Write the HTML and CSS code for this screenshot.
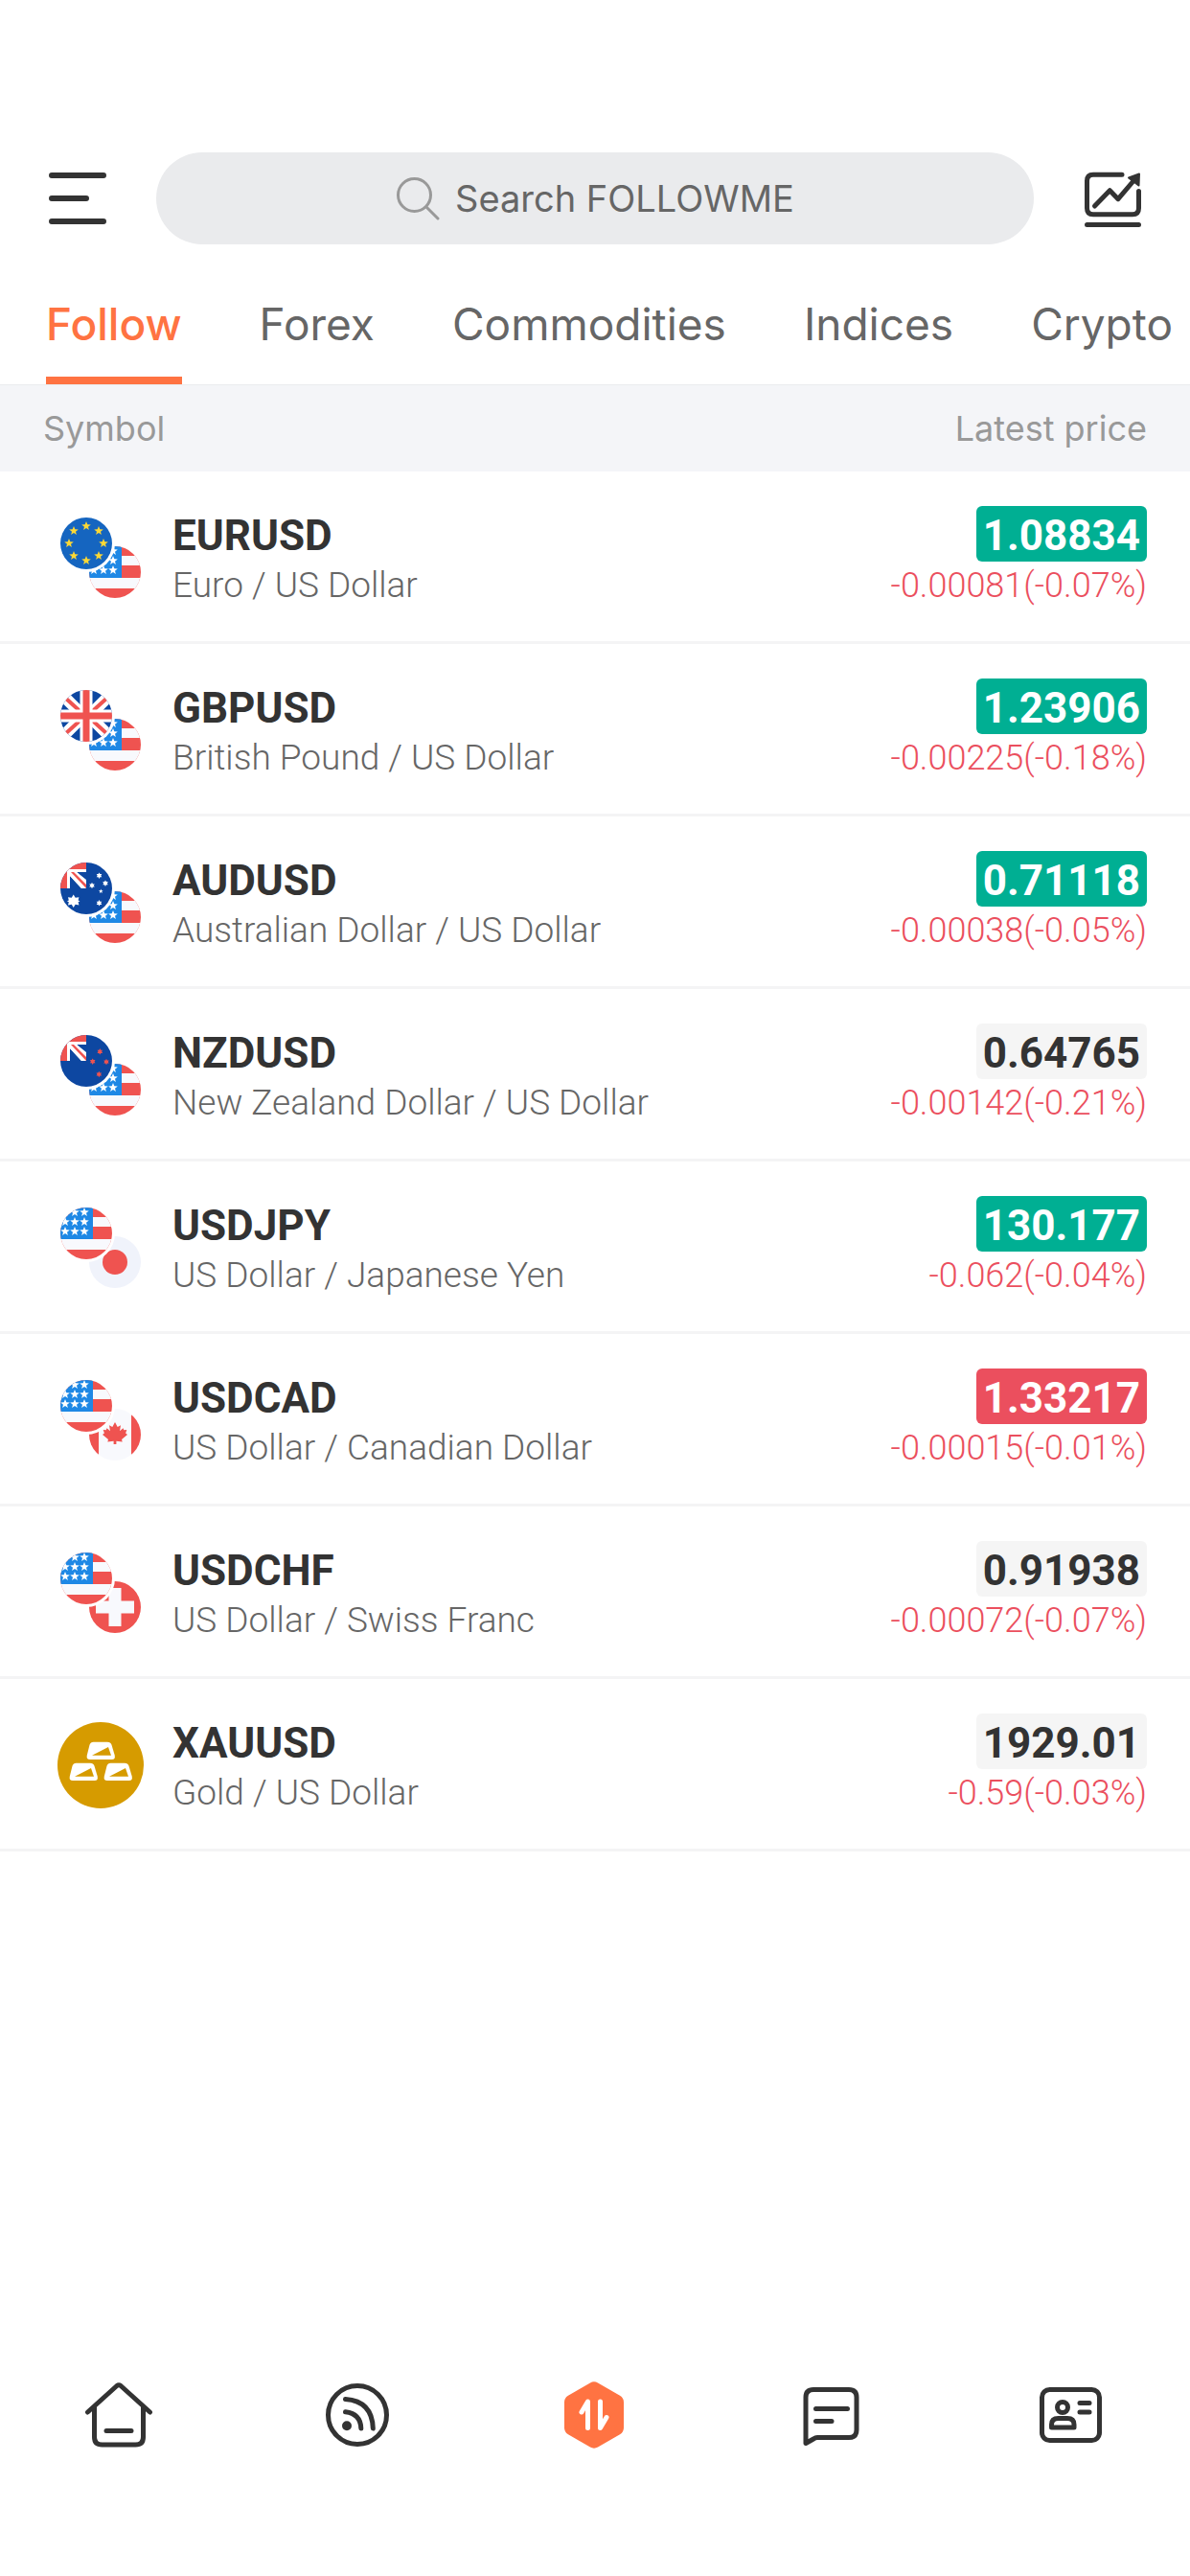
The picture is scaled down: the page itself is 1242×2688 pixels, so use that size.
FILE: index.html
```
<!DOCTYPE html>
<html lang="en">

<head>
    <meta charset="UTF-8">
    <meta name="viewport" content="width=device-width, initial-scale=1.0">
    <title>FOLLOWME - Quotes</title>
    <link rel="stylesheet" href="styles.css">
</head>

<body>
    <!-- Flags and shared shapes -->
    <svg class="sprite" width="0" height="0" aria-hidden="true">
        <defs>
            <clipPath id="round"><circle cx="27" cy="27" r="27" /></clipPath>
            <polygon id="star" points="0,-5 1.3,-1.7 4.8,-1.5 2,.7 2.9,4 0,2.1 -2.9,4 -2,.7 -4.8,-1.5 -1.3,-1.7" />
            <polygon id="spark" points="0,-3.2 .9,-1.6 2.8,-1.6 1.8,0 2.8,1.6 .9,1.6 0,3.2 -.9,1.6 -2.8,1.6 -1.8,0 -2.8,-1.6 -.9,-1.6" />
            <g id="union-arm">
                <path d="M-2 1 L27 30" stroke="#fff" stroke-width="12" />
                <path d="M0 3.5 L22 23.5" stroke="#ef5350" stroke-width="4" />
            </g>
            <g id="canton">
                <path fill="#ef5350" d="M0 0h27v27H0z" />
                <path fill="#fff" d="M7 7h20v20H7z" />
                <path fill="#0d47a1" d="M17 10h10v8zM10 14v13h12z" />
                <path fill="#fff" d="M10 10h7l10 9v8h-5L10 14z" />
                <path fill="#ef5350" d="M11 10h3l13 13v4z" />
            </g>
            <g id="us" clip-path="url(#round)">
                <path fill="#ef5350" d="M0 0h54v54H0z" />
                <path fill="#f8f9fd" d="M0 10h54v10H0zM0 33h54v11H0z" />
                <path fill="#1e88e5" d="M0 0h34v33H0z" />
                <g fill="#fff">
                    <use href="#star" x="5" y="5" /><use href="#star" x="15" y="5" /><use href="#star" x="25" y="5" />
                    <use href="#star" x="5" y="15" /><use href="#star" x="15" y="15" /><use href="#star" x="25" y="15" />
                    <use href="#star" x="5" y="25" /><use href="#star" x="15" y="25" /><use href="#star" x="25" y="25" />
                </g>
            </g>
            <g id="eu">
                <circle cx="27" cy="27" r="27" fill="#1565c0" />
                <g fill="#fdd835">
                    <use href="#star" x="27" y="9" /><use href="#star" x="40" y="14" />
                    <use href="#star" x="45" y="27" /><use href="#star" x="40" y="40" />
                    <use href="#star" x="27" y="45" /><use href="#star" x="14" y="40" />
                    <use href="#star" x="9" y="27" /><use href="#star" x="14" y="14" />
                </g>
            </g>
            <g id="gb" clip-path="url(#round)">
                <path fill="#0d47a1" d="M0 0h54v54H0z" />
                <use href="#union-arm" />
                <use href="#union-arm" transform="translate(54 0) scale(-1 1)" />
                <use href="#union-arm" transform="translate(0 54) scale(1 -1)" />
                <use href="#union-arm" transform="translate(54 54) scale(-1 -1)" />
                <path fill="#fff" d="M20.5 0h13v54h-13zM0 20.5h54v13H0z" />
                <path fill="#ef5350" d="M23.5 0h7v54h-7zM0 23.5h54v7H0z" />
            </g>
            <g id="au" clip-path="url(#round)">
                <path fill="#0d47a1" d="M0 0h54v54H0z" />
                <use href="#canton" />
                <g fill="#fff">
                    <path d="M13.7 33.5l2 3.3 3.7-.6-.8 3.2 1.9.9-1.9.9.8 3.2-3.7-.6-2 3.3-2-3.3-3.7.6.8-3.2-1.9-.9 1.9-.9-.8-3.2 3.7.6z" />
                    <use href="#spark" x="33" y="24" /><use href="#spark" x="40.5" y="13.7" />
                    <use href="#spark" x="47" y="21.7" /><use href="#spark" x="40.5" y="42.3" />
                    <use href="#star" transform="translate(42.3 30) scale(.5)" />
                </g>
            </g>
            <g id="nz" clip-path="url(#round)">
                <path fill="#0d47a1" d="M0 0h54v54H0z" />
                <use href="#canton" />
                <g fill="#ef5350">
                    <use href="#spark" x="41.3" y="17.3" /><use href="#spark" x="33.7" y="27.7" />
                    <use href="#spark" x="48" y="28" /><use href="#spark" x="40.3" y="41" />
                </g>
            </g>
            <g id="jp">
                <circle cx="27" cy="27" r="27" fill="#f0f3fb" />
                <circle cx="27" cy="27" r="13" fill="#ef5350" />
            </g>
            <g id="ca" clip-path="url(#round)">
                <path fill="#f8f9fd" d="M0 0h54v54H0z" />
                <path fill="#ef5350" d="M0 0h10v54H0zM44 0h10v54H44z" />
                <path fill="#ef5350" d="M27 14l2.7 5 3.3-1.7-1 6 3.5-3 .8 2 3-.3-1.2 3.5L40 27l-6 5 .7 2.5-6.3-.7V37h-2.800v-3.200l-6.300.7.7-2.5-6-5 1.900-1.500-1.200-3.500 3 .3.8-2 3.500 3-1-6 3.300 1.700z" />
            </g>
            <g id="ch">
                <circle cx="27" cy="27" r="27" fill="#ef5350" />
                <path fill="#f8f9fd" d="M20.5 7h13v13.5H47v13H33.5V47h-13V33.5H7v-13h13.5z" />
            </g>
            <g id="ingot">
                <path fill="#fff" d="M37.5 20.7h14.5q3.5 0 4.500 3l3.200 10.800q1 4.500-3 4.500H34q-4.200 0-3.200-4.500l2.700-10.800q1-3 4-3z" />
                <path fill="#d69b00" d="M36 34.7L53 26l3 8.700z" />
            </g>
        </defs>
    </svg>

    <header class="app-bar">
        <button type="button" class="icon-btn" aria-label="Menu">
            <svg viewBox="0 0 60 60" stroke-width="6">
                <path d="M3 6h54M3 30h36M3 54h54" />
            </svg>
        </button>
        <label class="search">
            <svg viewBox="0 0 46 46" stroke-width="3">
                <circle cx="19.5" cy="19.5" r="17" />
                <path d="M32 32l12 12" />
            </svg>
            <input type="text" placeholder="Search FOLLOWME" aria-label="Search FOLLOWME">
        </label>
        <button type="button" class="icon-btn" aria-label="Chart">
            <svg viewBox="0 0 60 60" stroke-width="5">
                <path d="M40 5.3H10q-6.5 0-6.5 6.5v28.4q0 6.5 6.5 6.5h41q6.5 0 6.5-6.5V22.5M3.5 57.5h54" />
                <path d="M11.5 38L27.3 21.7l8.7 9L51 13" />
                <path fill="#333" stroke="#333" stroke-width="2" d="M47 8.5l11-4-.5 12z" />
            </svg>
        </button>
    </header>

    <nav class="tabs">
        <a href="#follow" class="active">Follow</a>
        <a href="#forex">Forex</a>
        <a href="#commodities">Commodities</a>
        <a href="#indices">Indices</a>
        <a href="#crypto">Crypto</a>
    </nav>

    <main>
        <table class="quotes">
            <thead>
                <tr>
                    <th>Symbol</th>
                    <th class="right">Latest price</th>
                </tr>
            </thead>
            <tbody>
                <tr>
                    <td>
                        <div class="symbol">
                            <svg viewBox="0 0 90 90"><use href="#us" x="33" y="33" /><circle cx="30" cy="30" r="30" fill="#fff" /><use href="#eu" x="3" y="3" /></svg>
                            <div>
                                <div class="name">EURUSD</div>
                                <div class="desc">Euro / US Dollar</div>
                            </div>
                        </div>
                    </td>
                    <td class="right">
                        <span class="price up">1.08834</span>
                        <div class="change">-0.00081(-0.07%)</div>
                    </td>
                </tr>
                <tr>
                    <td>
                        <div class="symbol">
                            <svg viewBox="0 0 90 90"><use href="#us" x="33" y="33" /><circle cx="30" cy="30" r="30" fill="#fff" /><use href="#gb" x="3" y="3" /></svg>
                            <div>
                                <div class="name">GBPUSD</div>
                                <div class="desc">British Pound / US Dollar</div>
                            </div>
                        </div>
                    </td>
                    <td class="right">
                        <span class="price up">1.23906</span>
                        <div class="change">-0.00225(-0.18%)</div>
                    </td>
                </tr>
                <tr>
                    <td>
                        <div class="symbol">
                            <svg viewBox="0 0 90 90"><use href="#us" x="33" y="33" /><circle cx="30" cy="30" r="30" fill="#fff" /><use href="#au" x="3" y="3" /></svg>
                            <div>
                                <div class="name">AUDUSD</div>
                                <div class="desc">Australian Dollar / US Dollar</div>
                            </div>
                        </div>
                    </td>
                    <td class="right">
                        <span class="price up">0.71118</span>
                        <div class="change">-0.00038(-0.05%)</div>
                    </td>
                </tr>
                <tr>
                    <td>
                        <div class="symbol">
                            <svg viewBox="0 0 90 90"><use href="#us" x="33" y="33" /><circle cx="30" cy="30" r="30" fill="#fff" /><use href="#nz" x="3" y="3" /></svg>
                            <div>
                                <div class="name">NZDUSD</div>
                                <div class="desc">New Zealand Dollar / US Dollar</div>
                            </div>
                        </div>
                    </td>
                    <td class="right">
                        <span class="price">0.64765</span>
                        <div class="change">-0.00142(-0.21%)</div>
                    </td>
                </tr>
                <tr>
                    <td>
                        <div class="symbol">
                            <svg viewBox="0 0 90 90"><use href="#jp" x="33" y="33" /><circle cx="30" cy="30" r="30" fill="#fff" /><use href="#us" x="3" y="3" /></svg>
                            <div>
                                <div class="name">USDJPY</div>
                                <div class="desc">US Dollar / Japanese Yen</div>
                            </div>
                        </div>
                    </td>
                    <td class="right">
                        <span class="price up">130.177</span>
                        <div class="change">-0.062(-0.04%)</div>
                    </td>
                </tr>
                <tr>
                    <td>
                        <div class="symbol">
                            <svg viewBox="0 0 90 90"><use href="#ca" x="33" y="33" /><circle cx="30" cy="30" r="30" fill="#fff" /><use href="#us" x="3" y="3" /></svg>
                            <div>
                                <div class="name">USDCAD</div>
                                <div class="desc">US Dollar / Canadian Dollar</div>
                            </div>
                        </div>
                    </td>
                    <td class="right">
                        <span class="price down">1.33217</span>
                        <div class="change">-0.00015(-0.01%)</div>
                    </td>
                </tr>
                <tr>
                    <td>
                        <div class="symbol">
                            <svg viewBox="0 0 90 90"><use href="#ch" x="33" y="33" /><circle cx="30" cy="30" r="30" fill="#fff" /><use href="#us" x="3" y="3" /></svg>
                            <div>
                                <div class="name">USDCHF</div>
                                <div class="desc">US Dollar / Swiss Franc</div>
                            </div>
                        </div>
                    </td>
                    <td class="right">
                        <span class="price">0.91938</span>
                        <div class="change">-0.00072(-0.07%)</div>
                    </td>
                </tr>
                <tr>
                    <td>
                        <div class="symbol">
                            <svg viewBox="0 0 90 90"><circle cx="45" cy="45" r="45" fill="#d69b00" /><use href="#ingot" /><use href="#ingot" x="-18" y="22" /><use href="#ingot" x="18" y="22" /></svg>
                            <div>
                                <div class="name">XAUUSD</div>
                                <div class="desc">Gold / US Dollar</div>
                            </div>
                        </div>
                    </td>
                    <td class="right">
                        <span class="price">1929.01</span>
                        <div class="change">-0.59(-0.03%)</div>
                    </td>
                </tr>
            </tbody>
        </table>
    </main>

    <!-- Bottom navigation -->
    <nav class="bottom-nav">
        <a href="#home" aria-label="Home">
            <svg viewBox="0 0 72 72">
                <path d="M3.5 33L34 5.500q2-1.500 4 0L68.500 33M10.500 28v31q0 8 8 8h35q8 0 8-8V28M23 52.500h26" />
            </svg>
        </a>
        <a href="#feed" aria-label="Feed">
            <svg viewBox="0 0 72 72">
                <circle cx="36" cy="36" r="30.5" />
                <path d="M23.5 32.7q16 2 16.3 17.3M23.5 19.5q28 2 28.8 30.5" />
                <circle cx="25" cy="47.3" r="2.5" />
            </svg>
        </a>
        <a href="#trade" aria-label="Trade">
            <svg viewBox="0 0 72 72">
                <polygon fill="#ff7342" stroke="#ff7342" stroke-width="16" class="hex" points="35,9.4 58,22.7 58,49.3 35,62.6 12,49.3 12,22.7" />
                <path stroke="#fff" d="M22 33l6.5-11v27.5M41.5 22v27.5l6.5-11" />
            </svg>
        </a>
        <a href="#messages" aria-label="Messages">
            <svg viewBox="0 0 72 72">
                <path d="M8 65.5V17.5q0-8 8-8h37q8 0 8 8v34q0 8-8 8H20q-2 0-4 1.500zM18.500 29.500h33M18.500 42.500H35" />
            </svg>
        </a>
        <a href="#profile" aria-label="Profile">
            <svg viewBox="0 0 72 72">
                <rect x="5.5" y="9.5" width="60" height="53" rx="8" />
                <circle cx="27" cy="28" r="5.5" />
                <path d="M15.5 49v-3q0-6.500 7-6.500h9.500q7 0 7 6.500v3zM45 23.500h10M45 33h10" />
            </svg>
        </a>
    </nav>
</body>

</html>
```
FILE: styles.css
```
* {
    box-sizing: border-box;
    margin: 0;
    padding: 0;
}

body {
    font-family: Inter, "Liberation Sans", sans-serif;
    background-color: #fff;
    color: #333;
    min-height: 100vh;
    display: flex;
    flex-direction: column;
}

a {
    color: inherit;
    text-decoration: none;
}

.sprite {
    position: absolute;
}

/* Top bar */
.app-bar {
    display: flex;
    align-items: center;
    gap: 52px;
    padding: 159px 51px 28px;
}

.icon-btn {
    width: 60px;
    height: 60px;
    border: none;
    background: none;
    cursor: pointer;
}

.icon-btn svg,
.search svg,
.bottom-nav svg {
    display: block;
    fill: none;
    stroke: #333;
    stroke-linecap: round;
    stroke-linejoin: round;
}

.search {
    flex: 1;
    height: 96px;
    display: flex;
    justify-content: center;
    align-items: center;
    gap: 16px;
    background-color: #eaebed;
    border-radius: 48px;
}

.search svg {
    width: 46px;
    height: 46px;
    stroke: #999;
}

.search input {
    width: 354px;
    border: none;
    outline: none;
    background: none;
    font-family: inherit;
    font-size: 38px;
    color: #333;
}

.search input::placeholder {
    color: #666;
    opacity: 1;
}

/* Market tabs */
.tabs {
    display: flex;
    gap: 81px;
    padding-left: 48px;
    overflow: hidden;
    font-size: 46px;
    line-height: 110px;
    color: #666;
    white-space: nowrap;
}

.tabs a {
    border-bottom: 8px solid transparent;
}

.tabs .active {
    color: #ff7342;
    font-weight: 500;
    border-bottom-color: #ff7342;
}

/* Quotes table */
main {
    flex: 1;
}

.quotes {
    width: 100%;
    border-spacing: 0;
}

.quotes th {
    padding: 0 45px;
    border-top: 1px solid #ebecee;
    background-color: #f4f5f8;
    color: #999;
    font-size: 36px;
    font-weight: 400;
    line-height: 90px;
    text-align: left;
}

.quotes td {
    padding: 36px 45px 33px 60px;
    border-bottom: 3px solid #f4f4f5;
    font-family: Roboto, "Liberation Sans", sans-serif;
    font-size: 36px;
    font-weight: 300;
    line-height: 50px;
    white-space: nowrap;
}

.quotes .right {
    text-align: right;
}

.symbol {
    display: flex;
    align-items: center;
    gap: 30px;
}

.symbol svg {
    width: 90px;
    height: 90px;
}

.name,
.price {
    padding-top: 4px;
    font-size: 44px;
    font-weight: 700;
    line-height: 54px;
}

.desc {
    color: #666;
    font-size: 37px;
}

.price {
    display: block;
    width: fit-content;
    margin-left: auto;
    padding-left: 7px;
    padding-right: 7px;
    border-radius: 6px;
    background-color: #f5f5f5;
}

.price.up {
    background-color: #00af93;
    color: #fff;
}

.price.down {
    background-color: #eb4f5e;
    color: #fff;
}

.change {
    color: #eb4f5e;
}

/* Bottom navigation */
.bottom-nav {
    display: grid;
    grid-template-columns: repeat(5, 1fr);
    justify-items: center;
    padding-bottom: 132px;
}

.bottom-nav svg {
    width: 72px;
    height: 72px;
    stroke-width: 5px;
}
```
